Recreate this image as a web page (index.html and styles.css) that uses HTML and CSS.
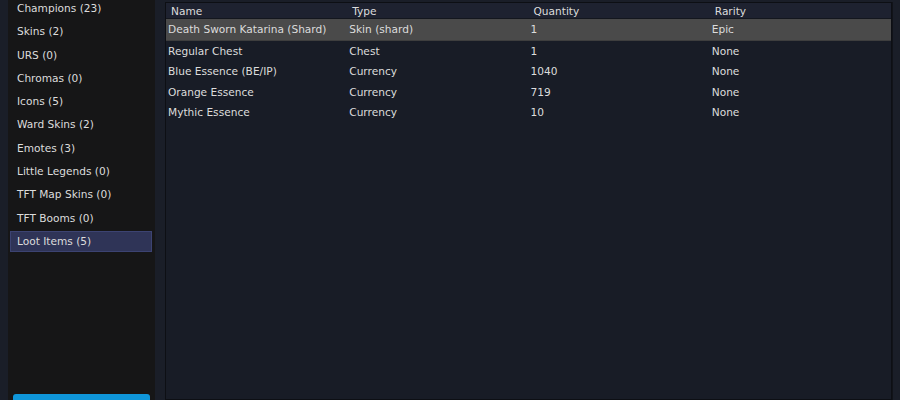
FILE: index.html
```html
<!DOCTYPE html>
<html lang="en">
<head>
    <meta charset="UTF-8">
    <title>Inventory</title>
    <link rel="stylesheet" href="styles.css">
</head>
<body>

<div class="app">
    <div class="sidebar">
        <ul class="categories">
            <li>Champions (23)</li>
            <li>Skins (2)</li>
            <li>URS (0)</li>
            <li>Chromas (0)</li>
            <li>Icons (5)</li>
            <li>Ward Skins (2)</li>
            <li>Emotes (3)</li>
            <li>Little Legends (0)</li>
            <li>TFT Map Skins (0)</li>
            <li>TFT Booms (0)</li>
            <li class="active">Loot Items (5)</li>
        </ul>
        <button class="export" aria-label="Export"></button>
    </div>

    <div class="table-panel">
        <table class="items">
            <thead>
                <tr>
                    <th>Name</th>
                    <th>Type</th>
                    <th>Quantity</th>
                    <th>Rarity</th>
                </tr>
            </thead>
            <tbody>
                <tr class="selected">
                    <td>Death Sworn Katarina (Shard)</td>
                    <td>Skin (shard)</td>
                    <td>1</td>
                    <td>Epic</td>
                </tr>
                <tr>
                    <td>Regular Chest</td>
                    <td>Chest</td>
                    <td>1</td>
                    <td>None</td>
                </tr>
                <tr>
                    <td>Blue Essence (BE/IP)</td>
                    <td>Currency</td>
                    <td>1040</td>
                    <td>None</td>
                </tr>
                <tr>
                    <td>Orange Essence</td>
                    <td>Currency</td>
                    <td>719</td>
                    <td>None</td>
                </tr>
                <tr>
                    <td>Mythic Essence</td>
                    <td>Currency</td>
                    <td>10</td>
                    <td>None</td>
                </tr>
            </tbody>
        </table>
    </div>
</div>

</body>
</html>
```

FILE: styles.css
```css
html, body {
    margin: 0;
    padding: 0;
    height: 100%;
}

body {
    background-color: #1a1e28;
    color: #dcdcdc;
    font-family: "DejaVu Sans", Verdana, sans-serif;
    font-size: 10.6px;
    overflow: hidden;
}

.app {
    display: flex;
    height: 100%;
    padding: 0 8px 0 8px;
    box-sizing: border-box;
    gap: 10px;
}

/* Lista kategorii po lewej */
.sidebar {
    width: 147px;
    background-color: #161617;
    display: flex;
    flex-direction: column;
    margin-top: -2px;
    flex-shrink: 0;
}

.categories {
    list-style: none;
    margin: 0;
    padding: 0 3px 0 2px;
}

.categories li {
    height: 19px;
    line-height: 19px;
    padding-left: 6px;
    margin-bottom: 2.3px;
    border: 1px solid transparent;
    white-space: nowrap;
}

.categories li.active {
    background-color: #2f3457;
    border-color: #3c4372;
}

.export {
    margin: auto 5px 0 5px;
    height: 7px;
    background-color: #0f96da;
    border: none;
    border-radius: 3px 3px 0 0;
    transform: translateY(1px);
}

/* Tabela przedmiotów */
.table-panel {
    flex: 1;
    margin-top: 2px;
    background-color: #181c26;
    border: 1px solid #0d0f14;
    box-shadow: 1px 0 0 #111319;
}

.items {
    width: 100%;
    border-collapse: collapse;
    table-layout: fixed;
}

.items th {
    background-color: #1e2230;
    font-weight: normal;
    text-align: left;
    height: 14px;
    line-height: 14px;
    padding: 1px 5px 0 5px;
    border-bottom: 1px solid #14171e;
}

.items td {
    height: 20.5px;
    line-height: 20.5px;
    padding: 0 2px;
    white-space: nowrap;
}

.items tr.selected td {
    background-color: #4a4a4a;
    border-top: 1px solid #5b5b5b;
    border-bottom: 1px solid #3e3e3e;
    height: 19.5px;
    line-height: 19.5px;
    padding-top: 1px;
}
```
